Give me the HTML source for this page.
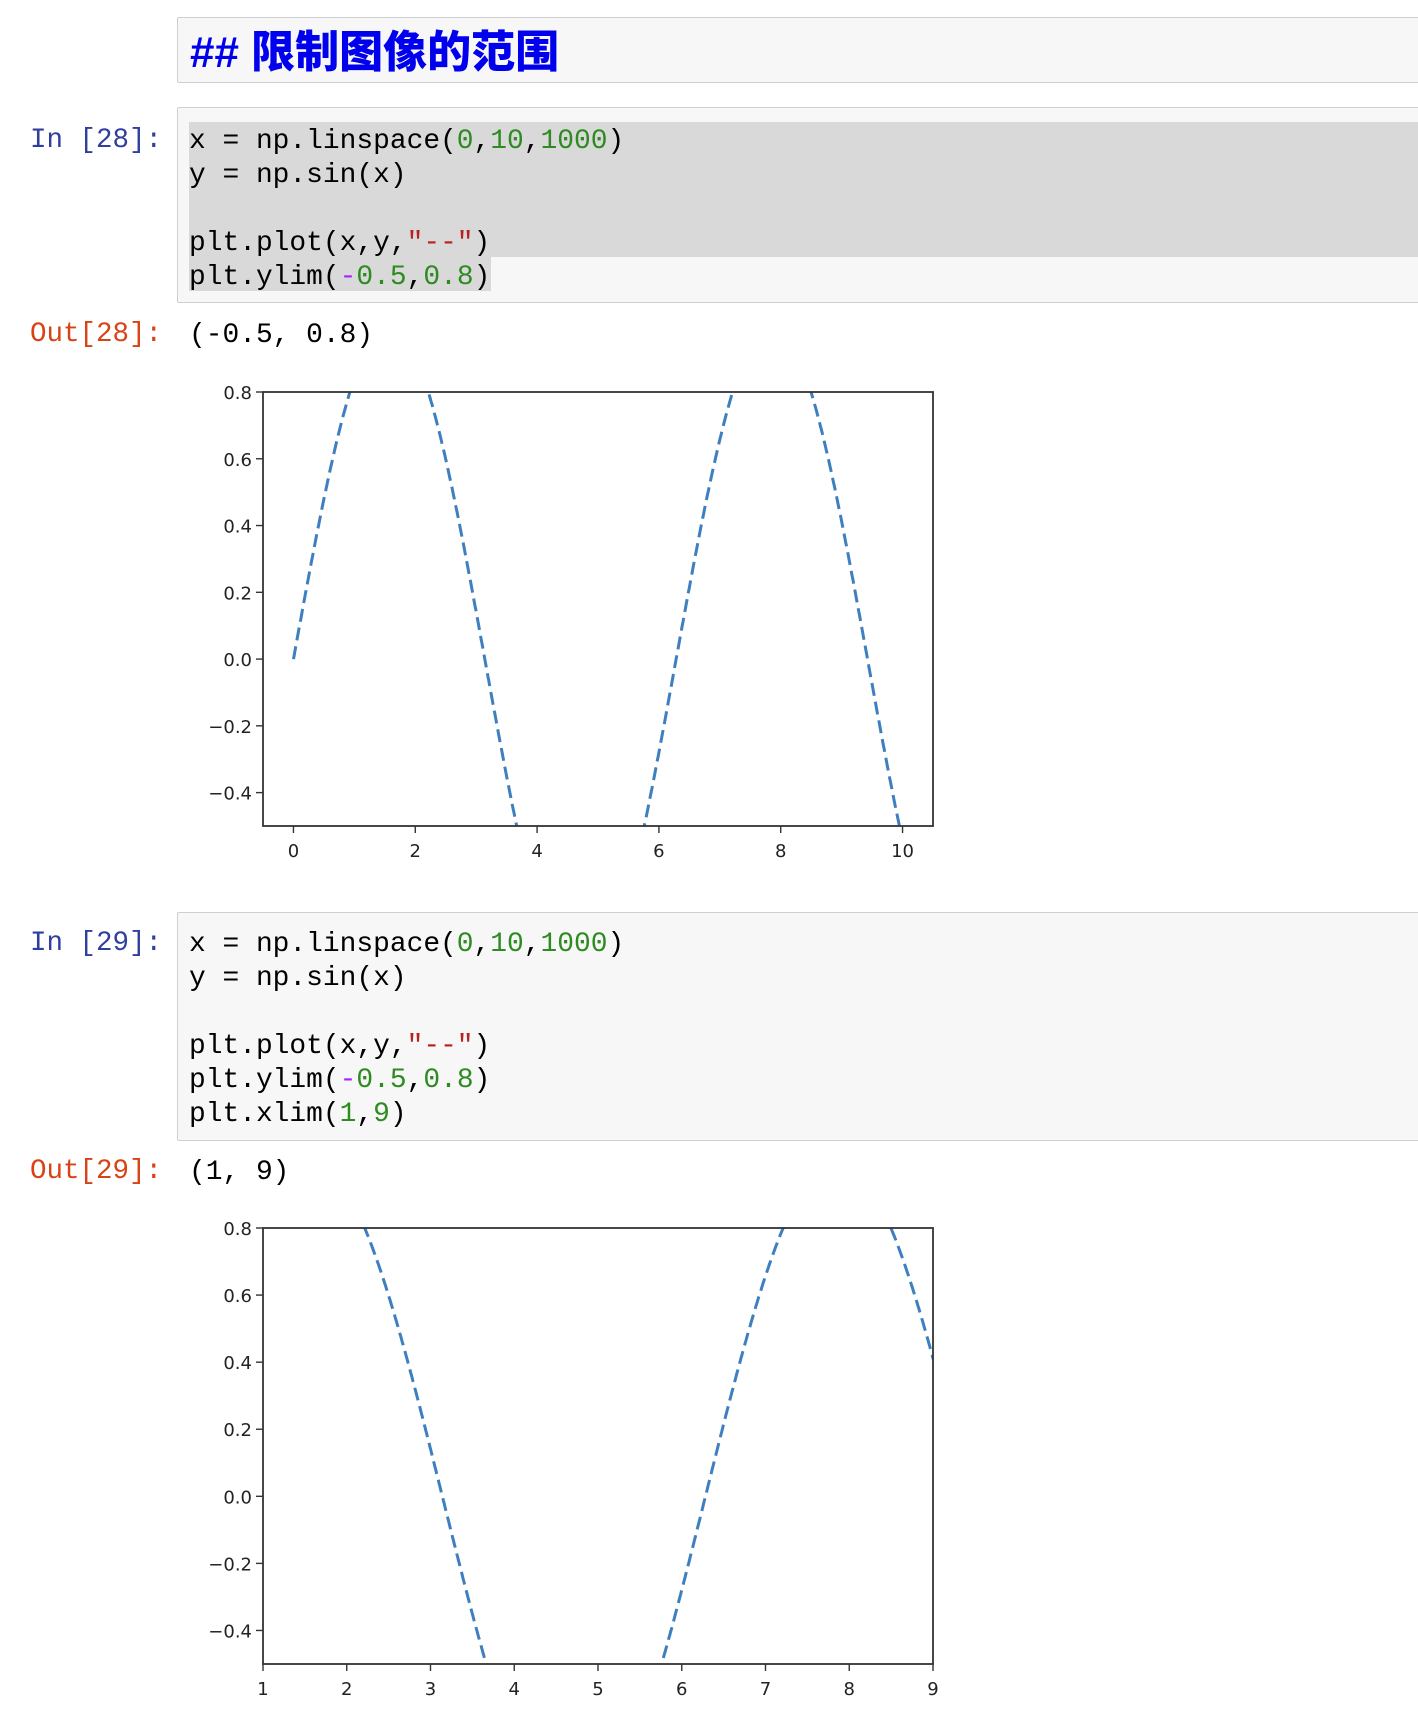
<!DOCTYPE html>
<html><head><meta charset="utf-8"><style>
body{margin:0;width:1418px;height:1732px;background:#fff;position:relative;overflow:hidden;font-family:"Liberation Mono",monospace}
.box{position:absolute;left:177px;right:-4px;background:#f7f7f7;border:1px solid #cfcfcf;border-radius:2px}
.prompt{position:absolute;left:30px;font-size:27.5px;font-family:"Liberation Mono",monospace;white-space:pre}
.in{color:#303F9F}.out{color:#D84315}
.code{position:absolute;left:189px;font-size:27.9px;line-height:34px;white-space:pre;color:#000}
.g{color:#2e8b22}.r{color:#BA2121}.p{color:#AA22FF}
.hl{position:absolute;background:#d9d9d9}
svg{position:absolute;left:0;top:0}
svg text{font-family:"DejaVu Sans",sans-serif;font-size:18px;fill:#222}
</style></head><body>
<div class="box" style="top:17px;height:64px"></div>
<div style="position:absolute;left:190px;top:16px;font:900 44px 'Liberation Sans','Noto Sans CJK SC',sans-serif;color:#0000ee">## 限制图像的范围</div>

<div class="box" style="top:107px;height:194px"></div>
<div class="hl" style="left:189px;right:0;top:122px;height:135px"></div>
<div class="hl" style="left:189px;width:302px;top:256px;height:35px"></div>
<div class="prompt in" style="top:125px">In [28]:</div>
<div class="code" style="top:125px">x = np.linspace(<span class="g">0</span>,<span class="g">10</span>,<span class="g">1000</span>)
y = np.sin(x)

plt.plot(x,y,<span class="r">"--"</span>)
plt.ylim(<span class="p">-</span><span class="g">0.5</span>,<span class="g">0.8</span>)</div>
<div class="prompt out" style="top:319px">Out[28]:</div>
<div class="code" style="top:319px">(-0.5, 0.8)</div>

<div class="box" style="top:912px;height:227px"></div>
<div class="prompt in" style="top:928px">In [29]:</div>
<div class="code" style="top:928px">x = np.linspace(<span class="g">0</span>,<span class="g">10</span>,<span class="g">1000</span>)
y = np.sin(x)

plt.plot(x,y,<span class="r">"--"</span>)
plt.ylim(<span class="p">-</span><span class="g">0.5</span>,<span class="g">0.8</span>)
plt.xlim(<span class="g">1</span>,<span class="g">9</span>)</div>
<div class="prompt out" style="top:1156px">Out[29]:</div>
<div class="code" style="top:1156px">(1, 9)</div>

<svg id="s" width="1418" height="1732"></svg>
<script>
var s=document.getElementById('s'),h='';
function plot(top,bot,x0,x1,ticks){
 var l=263,r=933,W=r-l,H=bot-top;
 function X(v){return l+(v-x0)/(x1-x0)*W}
 function Y(v){return top+(0.8-v)/1.3*H}
 var id='c'+top;
 h+='<clipPath id="'+id+'"><rect x="'+l+'" y="'+top+'" width="'+W+'" height="'+H+'"/></clipPath>';
 var pts=[];for(var i=0;i<1000;i++){var x=i*10/999;pts.push(X(x).toFixed(1)+','+Y(Math.sin(x)).toFixed(1));}
 h+='<polyline clip-path="url(#'+id+')" points="'+pts.join(' ')+'" fill="none" stroke="#3f7fbf" stroke-width="3" stroke-dasharray="13 6"/>';
 h+='<rect x="'+l+'" y="'+top+'" width="'+W+'" height="'+H+'" fill="none" stroke="#333" stroke-width="1.8"/>';
 [0.8,0.6,0.4,0.2,0.0,-0.2,-0.4].forEach(function(v){var y=Y(v);
  h+='<line x1="'+(l-7)+'" x2="'+l+'" y1="'+y+'" y2="'+y+'" stroke="#333" stroke-width="1.4"/>';
  h+='<text x="'+(l-11)+'" y="'+(y+7)+'" text-anchor="end">'+(v<0?'\u2212':'')+Math.abs(v).toFixed(1)+'</text>';});
 ticks.forEach(function(v){var x=X(v);
  h+='<line x1="'+x+'" x2="'+x+'" y1="'+bot+'" y2="'+(bot+7)+'" stroke="#333" stroke-width="1.4"/>';
  h+='<text x="'+x+'" y="'+(bot+31)+'" text-anchor="middle">'+v+'</text>';});
}
plot(392,826,-0.5,10.5,[0,2,4,6,8,10]);
plot(1228,1664,1,9,[1,2,3,4,5,6,7,8,9]);
s.innerHTML=h;
</script>
</body></html>
